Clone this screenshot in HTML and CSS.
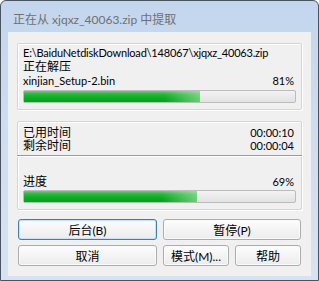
FILE: index.html
```html
<!DOCTYPE html>
<html lang="zh-CN">
<head>
  <meta charset="UTF-8" />
  <title>正在从 xjqxz_40063.zip 中提取</title>
  <link rel="stylesheet" href="styles.css">
</head>
<body>
  <div class="window">
    <div class="titlebar">正在从 xjqxz_40063.zip 中提取</div>

    <div class="client">
      <div class="group">
        <div class="line path">E:\BaiduNetdiskDownload\148067\xjqxz_40063.zip</div>
        <div class="line cn">正在解压</div>
        <div class="line row">
          <span>xinjian_Setup-2.bin</span>
          <span>81%</span>
        </div>
        <div class="bar"><div class="fill" style="width: 65%"></div></div>
      </div>

      <div class="group times">
        <div class="tline row">
          <span class="cn">已用时间</span>
          <span>00:00:10</span>
        </div>
        <div class="tline row">
          <span class="cn">剩余时间</span>
          <span>00:00:04</span>
        </div>
        <div class="separator"></div>
        <div class="line row progress-label">
          <span class="cn">进度</span>
          <span>69%</span>
        </div>
        <div class="bar"><div class="fill" style="width: 64%"></div></div>
      </div>

      <div class="buttons">
        <button class="btn focused">后台(B)</button>
        <button class="btn span2">暂停(P)</button>
        <button class="btn">取消</button>
        <button class="btn">模式(M)...</button>
        <button class="btn">帮助</button>
      </div>
    </div>
  </div>
</body>
</html>
```

FILE: styles.css
```css
* {
  box-sizing: border-box;
}

body {
  margin: 0;
  background-color: #ffffff;
  font-family: Lato, "Noto Sans CJK SC", sans-serif;
  font-size: 11px;
  color: #000000;
}

.cn {
  font-size: 12px;
}

.window {
  width: 319px;
  height: 281px;
  border: 1px solid #4a5360;
  border-radius: 6px 6px 0 0;
  background: linear-gradient(to bottom, #c3d6ed 0%, #cddcef 40%, #d6e3f2 100%);
  padding: 0 7px 4px 7px;
  display: flex;
  flex-direction: column;
}

.titlebar {
  height: 31px;
  padding: 12px 0 0 5px;
  font-size: 12px;
  line-height: 14px;
  color: #707070;
  white-space: nowrap;
}

.client {
  flex: 1;
  background-color: #f0f0f0;
  padding: 11px 9px 10px 9px;
}

.group {
  border: 1px solid #d5d5d5;
  border-radius: 2px;
  box-shadow: inset 1px 1px 0 #ffffff, 1px 1px 0 #ffffff;
  padding: 2px 5px 6px 5px;
}

.times {
  margin-top: 11px;
  padding-top: 4px;
}

.line {
  line-height: 14px;
  height: 14px;
  white-space: nowrap;
}

.path {
  letter-spacing: -0.2px;
}

.tline {
  line-height: 13px;
  height: 13px;
}

.row {
  display: flex;
  justify-content: space-between;
  align-items: center;
}

.row span:last-child {
  padding-right: 2px;
}

.separator {
  margin: 3px -6px 0 -6px;
  border-top: 1px solid #9a9a9a;
  border-bottom: 1px solid #ffffff;
}

.progress-label {
  margin-top: 18px;
}

.bar {
  margin-top: 2px;
  height: 13px;
  border: 1px solid #bcbcbc;
  border-radius: 2px;
  background: linear-gradient(to bottom, #f3f3f3, #e2e2e2);
}

.progress-label + .bar {
  margin-top: 1px;
}

.fill {
  height: 100%;
  background:
    linear-gradient(to right, rgba(255, 255, 255, 0) 80%, rgba(190, 240, 190, 0.55) 100%),
    linear-gradient(to bottom, #5fd36c 0%, #1fb935 30%, #0aa823 70%, #08a01f 100%);
}

.buttons {
  margin: 9px 2px 0 1px;
  display: grid;
  grid-template-columns: 139px 66px 66px;
  grid-auto-rows: 21px;
  column-gap: 6px;
  row-gap: 5px;
}

.btn {
  font-family: inherit;
  font-size: 12px;
  color: #000000;
  padding: 0;
  border: 1px solid #acacac;
  border-radius: 3px;
  background: linear-gradient(to bottom, #fdfdfd 0%, #f4f4f4 50%, #ececec 100%);
  box-shadow: inset 0 0 0 1px #fbfbfb;
}

.span2 {
  grid-column: span 2;
}

.focused {
  border-color: #3c7fb1;
  box-shadow: inset 0 0 0 1px #c6e4f7;
}
```
